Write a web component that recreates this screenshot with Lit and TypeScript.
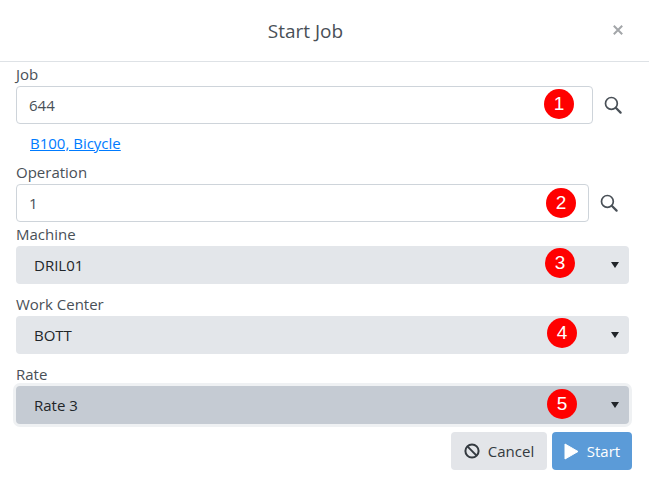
import {LitElement, html, css} from 'lit';
import {customElement} from 'lit/decorators.js';

const searchIcon = html`<svg class="search" width="18" height="18" viewBox="0 0 18 18"><circle cx="7.400" cy="7.400" r="5.900" fill="none" stroke="currentColor" stroke-width="1.700"/><path fill="none" stroke="currentColor" stroke-width="2.200" stroke-linecap="round" d="M12 12l4.600 4.600"/></svg>`;

@customElement('app-root')
class AppRoot extends LitElement {

    private selectRow(name: string, value: string, mark: number, right: number, top: number, focused = false) {
        return html`
            <label class="label">${name}</label>
            <div class="select-row ${focused ? 'focused' : ''}">
                <select class="select"><option>${value}</option></select>
                <svg class="caret" width="8" height="6" viewBox="0 0 8 6"><path fill="currentColor" d="M0 0h8L4 6z"/></svg>
                <span class="mark" style="right:${right}px;top:${top}px">${mark}</span>
            </div>
        `;
    }

    render() {
        return html`
            <header class="header">
                <h5>Start Job</h5>
                <svg class="close" width="10" height="10" viewBox="0 0 10 10"><path fill="none" stroke="currentColor" stroke-width="2" d="M.8.8l8.400 8.400M9.200.8L.8 9.200"/></svg>
            </header>
            <main class="body">
                <label class="label">Job</label>
                <div class="input-row">
                    <div class="input-wrap">
                        <input class="input" .value=${'644'}>
                        <span class="mark" style="right:19px;top:3px">1</span>
                    </div>
                    ${searchIcon}
                </div>
                <a class="link" href="#">B100, Bicycle</a>
                <label class="label operation">Operation</label>
                <div class="input-row narrow">
                    <div class="input-wrap">
                        <input class="input" .value=${'1'}>
                        <span class="mark" style="right:13px;top:4px">2</span>
                    </div>
                    ${searchIcon}
                </div>
                ${this.selectRow('Machine', 'DRIL01', 3, 54, 2)}
                <div class="gap"></div>
                ${this.selectRow('Work Center', 'BOTT', 4, 52, 2)}
                <div class="gap"></div>
                ${this.selectRow('Rate', 'Rate 3', 5, 52, 3, true)}
                <div class="actions">
                    <button class="btn cancel">
                        <svg width="16" height="16" viewBox="0 0 16 16"><circle cx="8" cy="8" r="6.600" fill="none" stroke="currentColor" stroke-width="2"/><path stroke="currentColor" stroke-width="2" d="M3.400 3.400l9.200 9.200"/></svg>
                        Cancel
                    </button>
                    <button class="btn start">
                        <svg width="15" height="17" viewBox="0 0 15 17"><path fill="currentColor" stroke="currentColor" stroke-linejoin="round" d="M1 1l13 7.500L1 16z"/></svg>
                        Start
                    </button>
                </div>
            </main>
        `;
    }

    static styles = css`
        :host {
            display: block;
            width: 649px;
            height: 496px;
            background: #fff;
            color: #495057;
            font-family: "Open Sans", "Noto Sans", sans-serif;
            font-size: 15px;
            overflow: hidden;
        }

        .header {
            height: 61px;
            border-bottom: 1px solid #dee2e6;
            display: flex;
            align-items: center;
            justify-content: center;
            position: relative;

            & h5 {
                margin: 0;
                font-size: 19px;
                font-weight: 400;
                color: #495057;
                transform: translateX(-19px);
            }
        }

        .close {
            position: absolute;
            right: 26px;
            top: 25px;
            color: #a3a6a9;
        }

        .body {
            padding: 0 17px 0 16px;
        }

        .label {
            display: block;
            height: 24px;
            line-height: 25px;
            color: #495057;

            &.operation {
                height: 28px;
                line-height: 25px;
                padding-top: 4px;
                box-sizing: border-box;
            }
        }

        .input-row {
            display: flex;
            align-items: center;
            gap: 11px;
            padding-right: 10px;
            color: #495057;

            &.narrow {
                padding-right: 14px;
            }
        }

        .input-wrap {
            position: relative;
            flex: 1;
            height: 38px;
        }

        .input {
            width: 100%;
            height: 38px;
            box-sizing: border-box;
            border: 1px solid #ced4da;
            border-radius: 4px;
            padding: 0 12px;
            font: inherit;
            color: #495057;
            background: #fff;
            outline: none;
        }

        .search {
            flex: none;
        }

        .link {
            display: block;
            margin: 8px 0 0 14px;
            height: 24px;
            line-height: 22px;
            color: #007bff;
            text-decoration: underline;
        }

        .gap {
            height: 8px;
        }

        .select-row {
            position: relative;
            height: 38px;
            margin-right: 3px;

            &.focused .select {
                background: #c5cbd3;
                box-shadow: 0 0 0 3px #eff1f3;
            }
        }

        .select {
            display: block;
            width: 100%;
            height: 38px;
            border: 0;
            border-radius: 4px;
            padding: 0 18px;
            appearance: none;
            background: #e3e6ea;
            font: inherit;
            color: #212529;
            outline: none;
        }

        .caret {
            position: absolute;
            right: 10px;
            top: 16px;
            color: #212529;
        }

        .mark {
            position: absolute;
            width: 30px;
            height: 30px;
            border-radius: 50%;
            background: #ff0000;
            color: #fff;
            font-family: "Liberation Sans", sans-serif;
            font-size: 19px;
            line-height: 30px;
            text-align: center;
        }

        .actions {
            display: flex;
            justify-content: flex-end;
            gap: 5px;
            margin: 8px 0 0;
        }

        .btn {
            height: 38px;
            border: 0;
            border-radius: 4px;
            display: flex;
            align-items: center;
            justify-content: center;
            gap: 8px;
            font: inherit;

            &.cancel {
                width: 96px;
                background: #e3e5e9;
                color: #343a40;
            }

            &.start {
                width: 80px;
                background: #5b9bd8;
                color: #fff;
            }
        }
    `;
}
